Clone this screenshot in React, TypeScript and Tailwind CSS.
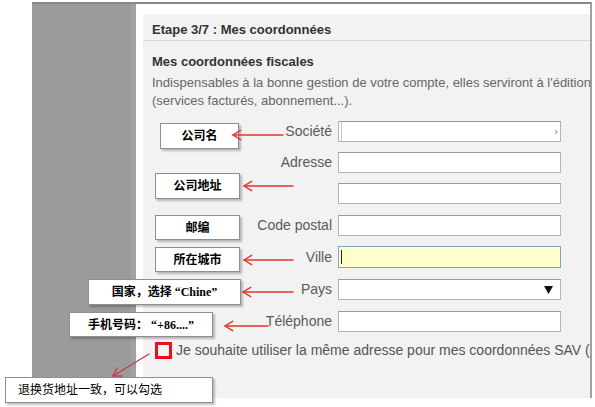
import React from 'react';

const labelCls = "w-[195px] shrink-0 text-right pr-[6px] text-[14px] text-[#5a5a5a] leading-[21px]";
const inputCls = "w-[223px] shrink-0 h-[21px] bg-white border border-[#b4b4b4] border-t-[#9a9a9a]";

function Row({ label, mt, children }: { label?: string; mt: string; children: React.ReactNode }) {
  return (
    <div className={`flex items-center ${mt}`}>
      <div className={labelCls}>{label}</div>
      {children}
    </div>
  );
}

function Note({ text, cls }: { text: React.ReactNode; cls: string }) {
  return (
    <div
      className={`absolute flex items-center bg-white border border-[#8e8e8e] shadow-[2px_2px_2px_rgba(0,0,0,0.25)] text-[12px] font-bold text-black whitespace-nowrap font-['Liberation_Serif','Noto_Sans_CJK_SC',serif] ${cls}`}
    >
      {text}
    </div>
  );
}

function Arrow({ x1, y1, x2, y2, color = '#e3342f' }: { x1: number; y1: number; x2: number; y2: number; color?: string }) {
  const a = Math.atan2(y2 - y1, x2 - x1);
  const len = 9;
  const spread = 0.55;
  const p1 = [x2 - len * Math.cos(a - spread), y2 - len * Math.sin(a - spread)];
  const p2 = [x2 - len * Math.cos(a + spread), y2 - len * Math.sin(a + spread)];
  return (
    <g stroke={color} strokeWidth="1.4" fill="none" strokeLinecap="round">
      <line x1={x1} y1={y1} x2={x2} y2={y2} />
      <polyline points={`${p1[0]},${p1[1]} ${x2},${y2} ${p2[0]},${p2[1]}`} />
    </g>
  );
}

export default function App() {
  return (
    <div className="relative w-[595px] h-[407px] bg-white overflow-hidden font-['Liberation_Sans',Arial,sans-serif]">
      <div className="ml-[32px] mt-[2px] flex w-[560px] h-[396px] border-t-2 border-r-2 border-t-[#888888] border-r-[#a0a0a0]">
        <div className="w-[104px] shrink-0 bg-[#9b9b9b] border-r-[5px] border-r-[#a2a2a2]" />
        <div className="flex-1 min-w-0 pl-[7px] pt-[10px] flex">
          <div className="flex-1 min-w-0 bg-[#f2f2f2] overflow-hidden">
            <div className="pl-[9px] pt-[8px] pb-[2px] border-b border-[#d9d9d9] text-[13px] font-bold text-[#333] leading-[16px] whitespace-nowrap">
              Etape 3/7 : Mes coordonnées
            </div>
            <div className="pl-[9px] mt-[13px] text-[13px] font-bold text-[#333] leading-[16px] whitespace-nowrap">
              Mes coordonnées fiscales
            </div>
            <div className="pl-[9px] mt-[4px] text-[13px] text-[#666] leading-[18px] whitespace-nowrap">
              <div>Indispensables à la bonne gestion de votre compte, elles serviront à l'édition de vos factures</div>
              <div>(services facturés, abonnement...).</div>
            </div>

            <Row label="Société" mt="mt-[11px]">
              <div className={`${inputCls} flex items-center justify-between`}>
                <div className="w-[3px] h-full border-r border-[#c8c8c8]" />
                <span className="pr-[2px] text-[11px] text-[#888] leading-none">›</span>
              </div>
            </Row>
            <Row label="Adresse" mt="mt-[10px]">
              <div className={inputCls} />
            </Row>
            <Row mt="mt-[10px]">
              <div className={inputCls} />
            </Row>
            <Row label="Code postal" mt="mt-[11px]">
              <div className={inputCls} />
            </Row>
            <Row label="Ville" mt="mt-[10px]">
              <div className="w-[223px] shrink-0 h-[22px] bg-[#ffffcc] border border-[#7ea2c8] flex items-center pl-[2px]">
                <div className="w-px h-[14px] bg-[#222]" />
              </div>
            </Row>
            <Row label="Pays" mt="mt-[11px]">
              <div className={`${inputCls} flex items-center justify-end pr-[7px]`}>
                <svg width="9" height="8" viewBox="0 0 9 8">
                  <polygon points="0,0 9,0 4.5,8" fill="#111" />
                </svg>
              </div>
            </Row>
            <Row label="Téléphone" mt="mt-[11px]">
              <div className={inputCls} />
            </Row>

            <div className="flex items-center mt-[8px] pl-[12px] whitespace-nowrap">
              <div className="w-[17px] h-[17px] shrink-0 border-[3px] border-[#e8101c] bg-[#f4f4f4]" />
              <span className="ml-[4px] text-[14px] text-[#555]">
                Je souhaite utiliser la même adresse pour mes coordonnées SAV (récupération des retours)
              </span>
            </div>
          </div>
        </div>
      </div>

      <Note text="公司名" cls="left-[160px] top-[123px] w-[79px] h-[26px] justify-center" />
      <Note text="公司地址" cls="left-[155px] top-[173px] w-[85px] h-[26px] justify-center" />
      <Note text="邮编" cls="left-[155px] top-[215px] w-[85px] h-[25px] justify-center" />
      <Note text="所在城市" cls="left-[155px] top-[247px] w-[85px] h-[25px] justify-center" />
      <Note text="国家，选择 “Chine”" cls="left-[88px] top-[279px] w-[153px] h-[26px] justify-center" />
      <Note text="手机号码： “+86....”" cls="left-[69px] top-[312px] w-[144px] h-[25px] justify-center" />
      <Note text="退换货地址一致，可以勾选" cls="left-[5px] top-[377px] w-[208px] h-[26px] pl-[12px] font-normal" />

      <svg className="absolute inset-0 pointer-events-none" width="595" height="407" viewBox="0 0 595 407">
        <Arrow x1={283} y1={135} x2={233} y2={135} />
        <Arrow x1={293} y1={186} x2={244} y2={186} />
        <Arrow x1={293} y1={260} x2={244} y2={260} />
        <Arrow x1={293} y1={292} x2={243} y2={292} />
        <Arrow x1={268} y1={326} x2={225} y2={326} />
        <Arrow x1={149} y1={354} x2={113} y2={376} color="#c0404a" />
      </svg>
    </div>
  );
}
